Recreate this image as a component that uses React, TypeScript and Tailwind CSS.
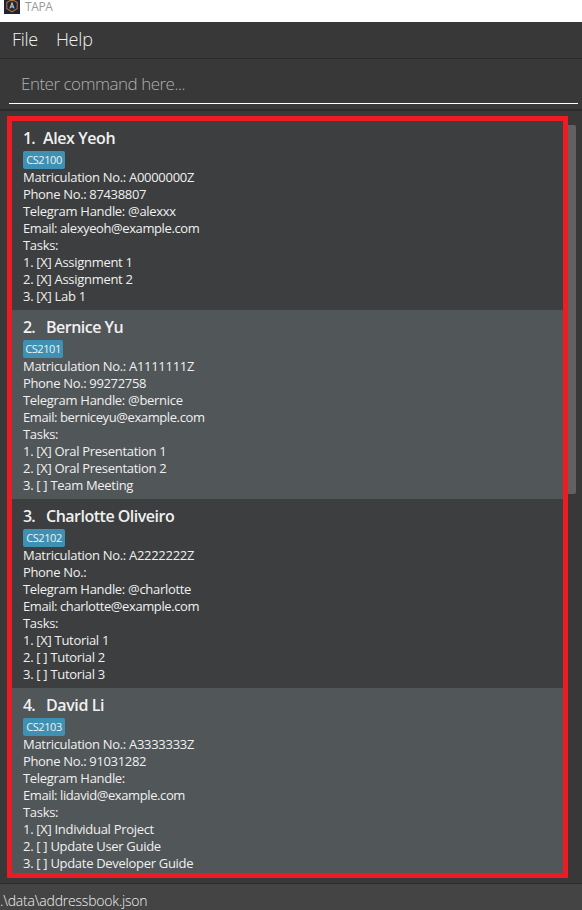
import React from "react";

type Person = { no: string; name: string; nameGap: string; nameTrack: string; tag: string; tagWidth: string; lines: string[] };

const people: Person[] = [
  {
    no: "1.", name: "Alex Yeoh", nameGap: "w-[20px]", nameTrack: "tracking-[-0.4px]", tag: "CS2100", tagWidth: "w-[42px]",
    lines: [
      "Matriculation No.: A0000000Z", "Phone No.: 87438807", "Telegram Handle: @alexxx",
      "Email: alexyeoh@example.com", "Tasks:",
      "1. [X] Assignment 1", "2. [X] Assignment 2", "3. [X] Lab 1",
    ],
  },
  {
    no: "2.", name: "Bernice Yu", nameGap: "w-[23px]", nameTrack: "tracking-[-0.5px]", tag: "CS2101", tagWidth: "w-[40px]",
    lines: [
      "Matriculation No.: A1111111Z", "Phone No.: 99272758", "Telegram Handle: @bernice",
      "Email: berniceyu@example.com", "Tasks:",
      "1. [X] Oral Presentation 1", "2. [X] Oral Presentation 2", "3. [ ] Team Meeting",
    ],
  },
  {
    no: "3.", name: "Charlotte Oliveiro", nameGap: "w-[23px]", nameTrack: "tracking-[-0.5px]", tag: "CS2102", tagWidth: "w-[42px]",
    lines: [
      "Matriculation No.: A2222222Z", "Phone No.:", "Telegram Handle: @charlotte",
      "Email: charlotte@example.com", "Tasks:",
      "1. [X] Tutorial 1", "2. [ ] Tutorial 2", "3. [ ] Tutorial 3",
    ],
  },
  {
    no: "4.", name: "David Li", nameGap: "w-[23px]", nameTrack: "tracking-[-0.4px]", tag: "CS2103", tagWidth: "w-[42px]",
    lines: [
      "Matriculation No.: A3333333Z", "Phone No.: 91031282", "Telegram Handle:",
      "Email: lidavid@example.com", "Tasks:",
      "1. [X] Individual Project", "2. [ ] Update User Guide", "3. [ ] Update Developer Guide",
    ],
  },
];

// Emails and phone numbers are set slightly tighter than the other lines.
function trackingFor(text: string) {
  if (text.startsWith("Email")) return "tracking-[-0.4px]";
  if (text.startsWith("Phone")) return "tracking-[-0.34px]";
  return "tracking-[-0.3px]";
}

function Logo() {
  return (
    <svg className="block h-[14px] w-4" viewBox="0 0 16 14">
      <rect width="16" height="14" fill="#1b2438" />
      <path d="M8 -0.6 L13.2 2.4 V8.8 L8 11.8 L2.8 8.8 V2.4 Z" fill="none" stroke="#b8691e" strokeWidth="1.1" />
      <path d="M6 8.4 L8 3 L10 8.4 M6.8 6.8 H9.2" fill="none" stroke="#b4bbc5" strokeWidth="1.2" />
    </svg>
  );
}

function Card({ person, shaded }: { person: Person; shaded: boolean }) {
  return (
    <section className={`h-[189px] shrink-0 pl-[11px] text-[#f0f0f0] ${shaded ? "bg-[#515658]" : "bg-[#3c3e3f]"}`}>
      <h2 className="flex h-[30px] whitespace-pre pt-[6px] text-[16px] font-semibold leading-[22px]">
        <span className={`tracking-[-0.8px] ${person.nameGap}`}>{person.no}</span>
        <span className={person.nameTrack}>{person.name}</span>
      </h2>
      <div className={`flex h-[18px] items-center justify-center rounded-[2px] bg-[#3e91b3] text-[11px] tracking-[-0.4px] ${person.tagWidth}`}>
        {person.tag}
      </div>
      {person.lines.map((line) => (
        <p key={line} className={`h-[17px] whitespace-pre text-[13px] leading-[17px] ${trackingFor(line)}`}>{line}</p>
      ))}
    </section>
  );
}

export default function App() {
  return (
    <div className="flex h-[910px] w-[582px] flex-col overflow-hidden bg-[#383838] font-['Open_Sans',sans-serif]">
      <header className="flex h-[22px] shrink-0 bg-white pl-1">
        <Logo />
        <span className="pl-[5px] text-[12px] leading-[14px] tracking-[-0.4px] text-[#999]">TAPA</span>
      </header>
      <nav className="flex h-[37px] shrink-0 gap-[18px] border-b border-[#292929] pl-3 text-[18px] font-light leading-[34px] text-[#f0f0f0]">
        <span className="tracking-[-0.3px]">File</span>
        <span className="tracking-[-0.2px]">Help</span>
      </nav>
      <div className="flex h-[52px] shrink-0 flex-col border-b-2 border-[#2b2b2b] pl-[9px] pr-1">
        <div className="h-[45px] border-b border-white pl-3 text-[17px] font-light leading-[50px] tracking-[-0.5px] text-[#b0b0b0]">
          Enter command here...
        </div>
      </div>
      <main className="flex h-[772px] shrink-0 pl-[7px] pt-[5px]">
        <div className="flex h-[762px] w-[561px] flex-col overflow-hidden border-[5px] border-[#ed1c24]">
          {people.map((person, i) => (
            <Card key={person.no} person={person} shaded={i % 2 === 1} />
          ))}
        </div>
        <div className="mt-[9px] h-[369px] w-2 rounded-r-[2px] bg-[#616161]" />
      </main>
      <footer className="h-[27px] shrink-0 border-t border-[#2b2b2b] bg-[#444] text-[14px] font-light leading-[33px] tracking-[-0.2px] text-[#f0f0f0]">
        .\data\addressbook.json
      </footer>
    </div>
  );
}
